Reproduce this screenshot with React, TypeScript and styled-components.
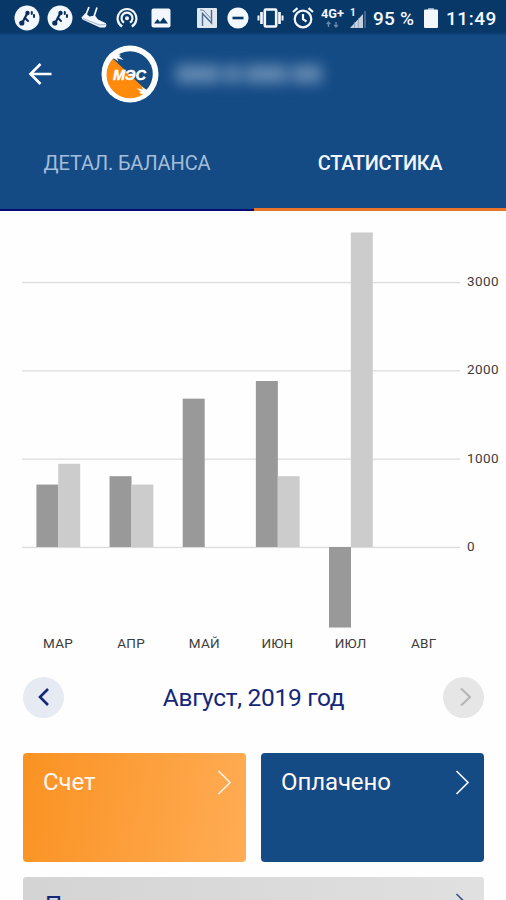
import React from "react";
import styled, { createGlobalStyle } from "styled-components";

const Global = createGlobalStyle`
  * { box-sizing: border-box; }
  body { margin: 0; background: #fff; font-family: Roboto, "Noto Sans", sans-serif; }
  button { font: inherit; border: 0; padding: 0; cursor: pointer; }
  svg { display: block; flex: none; }
`;

const Screen = styled.div`
  width: 506px;
  height: 900px;
  overflow: hidden;
  display: flex;
  flex-direction: column;
  background: #fefefe;
`;

const StatusBar = styled.div`
  flex: none;
  height: 35px;
  display: flex;
  align-items: center;
  padding-left: 10px;
  background: linear-gradient(#083868 0 32px, #124780 35px);
  color: #f3f7ff;
`;

const IconSlot = styled.span<{ $w: number }>`
  width: ${(p) => p.$w}px;
  flex: none;
  display: flex;
  justify-content: center;
`;

const SystemIcons = styled.div`
  display: flex;
  align-items: center;
  margin-left: 12px;
`;

const StatusText = styled.span<{ $w: number; $track: number }>`
  width: ${(p) => p.$w}px;
  flex: none;
  white-space: nowrap;
  font-size: 19px;
  font-weight: 500;
  letter-spacing: ${(p) => p.$track}px;
  line-height: 35px;
  padding-top: 2px;
`;

const Header = styled.header`
  flex: none;
  height: 176px;
  background: #144b85;
  display: flex;
  flex-direction: column;
  justify-content: space-between;
`;

const TitleRow = styled.div`
  height: 77px;
  display: flex;
  align-items: center;
  padding-left: 28px;
`;

const BackButton = styled.button`
  background: none;
  margin-right: 49px;
`;

const Account = styled.div`
  display: flex;
  align-items: center;
  gap: 5px;
  margin-left: 17px;
  filter: blur(7px);
`;

const AccountChunk = styled.span<{ $w: number }>`
  width: ${(p) => p.$w}px;
  height: 18px;
  background: #668bb3;
`;

const Tabs = styled.nav`
  height: 97px;
  display: flex;
`;

const Tab = styled.button<{ $active?: boolean }>`
  width: ${(p) => (p.$active ? 252 : 254)}px;
  padding-top: ${(p) => (p.$active ? 4 : 3)}px;
  background: none;
  font-size: 20px;
  letter-spacing: ${(p) => (p.$active ? -0.3 : -0.15)}px;
  font-weight: ${(p) => (p.$active ? 500 : 400)};
  color: ${(p) => (p.$active ? "#f1f5ff" : "#a6bdd9")};
  border-bottom: ${(p) => (p.$active ? "3px solid #e9742c" : "2px solid #050a75")};
`;

const ChartPanel = styled.section`
  flex: none;
  height: 460px;
`;

const PeriodRow = styled.div`
  flex: none;
  height: 54px;
  padding: 0 22px 2px 23px;
  display: flex;
  align-items: center;
  justify-content: space-between;
`;

const RoundButton = styled.button<{ $disabled?: boolean }>`
  width: 41px;
  height: 41px;
  border-radius: 50%;
  display: flex;
  align-items: center;
  justify-content: center;
  background: ${(p) => (p.$disabled ? "#e6e6e6" : "#e6ebf3")};
`;

const Period = styled.h2`
  margin: 0;
  font-size: 24.5px;
  font-weight: 400;
  color: #14277a;
  letter-spacing: -0.3px;
`;

const Cards = styled.div`
  flex: none;
  display: grid;
  grid-template-columns: 223px 223px;
  gap: 15px 15px;
  padding: 28px 0 0 23px;
`;

const Card = styled.div<{ $fill: string; $wide?: boolean; $color?: string }>`
  grid-column: ${(p) => (p.$wide ? "span 2" : "auto")};
  height: 109px;
  border-radius: ${(p) => (p.$wide ? 3 : 4)}px;
  padding: ${(p) => (p.$wide ? "16px 14px 0 22px" : "17px 14px 0 20px")};
  display: flex;
  align-items: flex-start;
  justify-content: space-between;
  font-size: 24px;
  line-height: 24px;
  letter-spacing: -0.1px;
  color: ${(p) => p.$color ?? "#fff8f2"};
  background: ${(p) => p.$fill};
`;

const ACCENT = "#f3f7ff";

const Guide = () => (
  <svg width="26" height="26" viewBox="0 0 26 26">
    <circle cx="13" cy="13" r="12.5" fill={ACCENT} />
    <path d="M8 18.5 10.500 13.500 13.200 8.500" stroke="#0a2f5f" strokeWidth="2.200" fill="none" strokeLinecap="round" />
    <circle cx="13.500" cy="8" r="2.200" fill="#0a2f5f" />
    <circle cx="7.800" cy="18" r="2.600" fill="#0a2f5f" />
    <path d="m11.500 13.500 2.500 2.500M17.800 7v2M20 10v2" stroke="#0a2f5f" strokeWidth="2" strokeLinecap="round" />
  </svg>
);

const Shoe = () => (
  <svg width="26" height="23" viewBox="0 0 26 23">
    <path d="M.5 11.500 4.500 7l4 3.500 5.500-1 3 4 7.500 3.500c1.500 1 1 4.500-1 4.500h-4.500L1.500 13.500Z" fill={ACCENT} />
    <path d="M5 8.500 8 1M13 10.500l3-9" stroke={ACCENT} strokeWidth="1.700" />
    <path d="m2 12.500 16.500 6.500 6-.5" stroke="#9db1ca" fill="none" />
  </svg>
);

const Hotspot = () => (
  <svg width="22" height="22" viewBox="0 0 22 22" fill="none" stroke={ACCENT} strokeWidth="2.200">
    <path d="M6.200 19.500a9.400 9.400 0 1 1 9.600 0" />
    <path d="M8 15.700a5.500 5.500 0 1 1 6 0" />
    <circle cx="11" cy="11.300" r="2" fill={ACCENT} stroke="none" />
  </svg>
);

const Picture = () => (
  <svg width="20" height="20" viewBox="0 0 20 20">
    <rect x=".5" y=".5" width="19" height="19" rx="2" fill={ACCENT} />
    <path d="m3 15.500 3.500-4.500 2.500 3 3.500-4.500 4.500 6Z" fill="#083868" />
  </svg>
);

const Nfc = () => (
  <svg width="20" height="20" viewBox="0 0 20 20">
    <rect width="20" height="20" rx="1" fill="#dfe7f1" />
    <path d="M5.500 18V5.500L14.500 15V2" fill="none" stroke="#4a6b90" strokeWidth="1.400" />
    <path d="M3 2h3l8 8.500" fill="none" stroke="#6c88a8" strokeWidth="1" />
  </svg>
);

const Dnd = () => (
  <svg width="22" height="22" viewBox="0 0 22 22">
    <circle cx="11" cy="11" r="10.600" fill={ACCENT} />
    <rect x="5.500" y="9.700" width="11" height="2.600" fill="#083868" />
  </svg>
);

const Vibrate = () => (
  <svg width="27" height="20" viewBox="0 0 27 20" fill="none" stroke={ACCENT}>
    <rect x="7.800" y="1.500" width="11.400" height="17" rx="1" strokeWidth="2.600" />
    <path d="M4.500 4v12M22.500 4v12" strokeWidth="2.700" />
    <path d="M1.500 7.500v5M25.500 7.500v5" strokeWidth="2" />
  </svg>
);

const Alarm = () => (
  <svg width="22" height="22" viewBox="0 0 22 22" fill="none" stroke={ACCENT} strokeWidth="2.200">
    <circle cx="11" cy="12" r="8.300" />
    <path d="m1 5 4.500-3.800M21 5l-4.500-3.800M11 7v5.200l3.500 2.300" />
  </svg>
);

const Lte = () => (
  <svg width="24" height="22" viewBox="0 0 24 22">
    <text x="0" y="11" fontSize="13" fontWeight="700" fill={ACCENT} textLength="23" lengthAdjust="spacingAndGlyphs">4G+</text>
    <path d="M7.500 20v-5m-1.800 2 1.800-2 1.800 2M15 15v5m-1.800-2 1.800 2 1.800-2" fill="none" stroke="#6689af" strokeWidth="1.400" />
  </svg>
);

const Signal = () => (
  <svg width="18" height="22" viewBox="0 0 18 22">
    <text x="1" y="9" fontSize="10" fontWeight="700" fill={ACCENT}>1</text>
    <path d="M1 21 14 7v14Z" fill="#c4d0df" />
    <path d="M5.500 15v6M9.500 11v10" stroke="#8299b5" strokeWidth=".7" />
    <path d="M16 4v17" stroke="#4e7199" strokeWidth="1.600" />
  </svg>
);

const Battery = () => (
  <svg width="14" height="20" viewBox="0 0 14 20">
    <path d="M4 0h6v2H4Z" fill="#8ba3bf" />
    <rect y="1.500" width="14" height="18.500" rx="1" fill={ACCENT} />
  </svg>
);

const BackArrow = () => (
  <svg width="24" height="24" viewBox="0 0 24 24" fill="none" stroke="#fff" strokeWidth="2.600">
    <path d="M23.500 12H3M12.500 2 2.500 12l10 10" />
  </svg>
);

const Logo = () => (
  <svg width="58" height="58" viewBox="0 0 58 58">
    <circle cx="29" cy="29" r="28.500" fill="#fff" />
    <circle cx="29" cy="29" r="22.800" fill="#144b85" />
    <path d="M12 13.700 46 46A22.800 22.800 0 0 1 12 13.700Z" fill="#ff8a0b" />
    <path d="m9 12 5-4 6 2-2 1 4.500 4-6.500-1.800 1.500 3.300-6-4-2 3Z" fill="#fff" />
    <path d="m49 46-5 4-6-2 2-1-4.500-4 6.500 1.800-1.500-3.300 6 4 2-3Z" fill="#fff" />
    <text x="12" y="34.500" fill="#fff" stroke="#fff" strokeWidth=".5" fontFamily="Liberation Sans" fontSize="15.500" fontWeight="700" fontStyle="italic" textLength="33" lengthAdjust="spacingAndGlyphs">МЭС</text>
  </svg>
);

const Chevron = ({ color, width = 2, left = false }: { color: string; width?: number; left?: boolean }) => (
  <svg width="14" height="20" viewBox="0 0 14 20" fill="none" stroke={color} strokeWidth={width}>
    <path d={left ? "M11 2 3 10l8 8" : "m4 1.500 9 8.500-9 8.500"} />
  </svg>
);

const CardChevron = ({ color }: { color: string }) => (
  <svg width="15" height="25" viewBox="0 0 15 25" fill="none" stroke={color} strokeWidth="1.700">
    <path d="m1.500 1 11.500 11.500L1.500 24" />
  </svg>
);

const statusLeft: [React.FC, number][] = [[Guide, 33], [Guide, 33], [Shoe, 35], [Hotspot, 32], [Picture, 36]];
const statusRight: [React.FC, number][] = [[Nfc, 32], [Dnd, 30], [Vibrate, 34], [Alarm, 31], [Lte, 30], [Signal, 20]];

type Month = { name: string; billed: number; paid: number };
const months: Month[] = [
  { name: "МАР", billed: 707, paid: 942 },
  { name: "АПР", billed: 802, paid: 707 },
  { name: "МАЙ", billed: 1680, paid: 0 },
  { name: "ИЮН", billed: 1880, paid: 802 },
  { name: "ИЮЛ", billed: -912, paid: 3562 },
  { name: "АВГ", billed: 0, paid: 0 },
];

const ZERO = 336;
const UNIT = 0.0883;

const Bar = ({ x, value, fill }: { x: number; value: number; fill: string }) => (
  <rect x={x} y={value > 0 ? ZERO - value * UNIT : ZERO} width="22" height={Math.abs(value) * UNIT} fill={fill} />
);

const Chart = () => (
  <svg width="506" height="460" viewBox="0 0 506 460">
    {[3000, 2000, 1000, 0].map((v) => (
      <g key={v}>
        <rect x="22" y={ZERO - v * UNIT - 0.2} width="438" height="1.300" fill="#dcdcdc" />
        <text x="467" y={ZERO - v * UNIT + 4} fontSize="13.500" fill="#3c3c3c" letterSpacing=".4">{v}</text>
      </g>
    ))}
    {months.map((m, i) => (
      <g key={m.name}>
        <Bar x={36.400 + i * 73.150} value={m.billed} fill="#999" />
        <Bar x={58.200 + i * 73.150} value={m.paid} fill="#ccc" />
        <text x={58 + i * 73.150} y="436.500" textAnchor="middle" fontSize="13.500" fill="#3c3c3c" letterSpacing=".2">{m.name}</text>
      </g>
    ))}
  </svg>
);

export default function App() {
  return (
    <Screen>
      <Global />
      <StatusBar>
        {statusLeft.map(([Icon, w], i) => <IconSlot key={i} $w={w}><Icon /></IconSlot>)}
        <SystemIcons>
          {statusRight.map(([Icon, w], i) => <IconSlot key={i} $w={w}><Icon /></IconSlot>)}
        </SystemIcons>
        <IconSlot $w={5} />
        <StatusText $w={50} $track={0.2}>95 %</StatusText>
        <IconSlot $w={16}><Battery /></IconSlot>
        <IconSlot $w={7} />
        <StatusText $w={54} $track={0.55}>11:49</StatusText>
      </StatusBar>
      <Header>
        <TitleRow>
          <BackButton aria-label="Назад"><BackArrow /></BackButton>
          <Logo />
          <Account>
            <AccountChunk $w={44} />
            <AccountChunk $w={15} />
            <AccountChunk $w={42} />
            <AccountChunk $w={30} />
          </Account>
        </TitleRow>
        <Tabs>
          <Tab>ДЕТАЛ. БАЛАНСА</Tab>
          <Tab $active>СТАТИСТИКА</Tab>
        </Tabs>
      </Header>
      <ChartPanel><Chart /></ChartPanel>
      <PeriodRow>
        <RoundButton aria-label="Предыдущий месяц"><Chevron color="#14277a" width={2.600} left /></RoundButton>
        <Period>Август, 2019 год</Period>
        <RoundButton $disabled aria-label="Следующий месяц"><Chevron color="#b5b5b5" width={2} /></RoundButton>
      </PeriodRow>
      <Cards>
        <Card $fill="linear-gradient(100deg, #fa9222, #ffac55)">Счет<CardChevron color="#fff1e2" /></Card>
        <Card $fill="#144b85">Оплачено<CardChevron color="#f1f5ff" /></Card>
        <Card $wide $fill="linear-gradient(90deg, #d4d4d4, #e0e0e0)" $color="#14277a">Показания<CardChevron color="#3a568a" /></Card>
      </Cards>
    </Screen>
  );
}
